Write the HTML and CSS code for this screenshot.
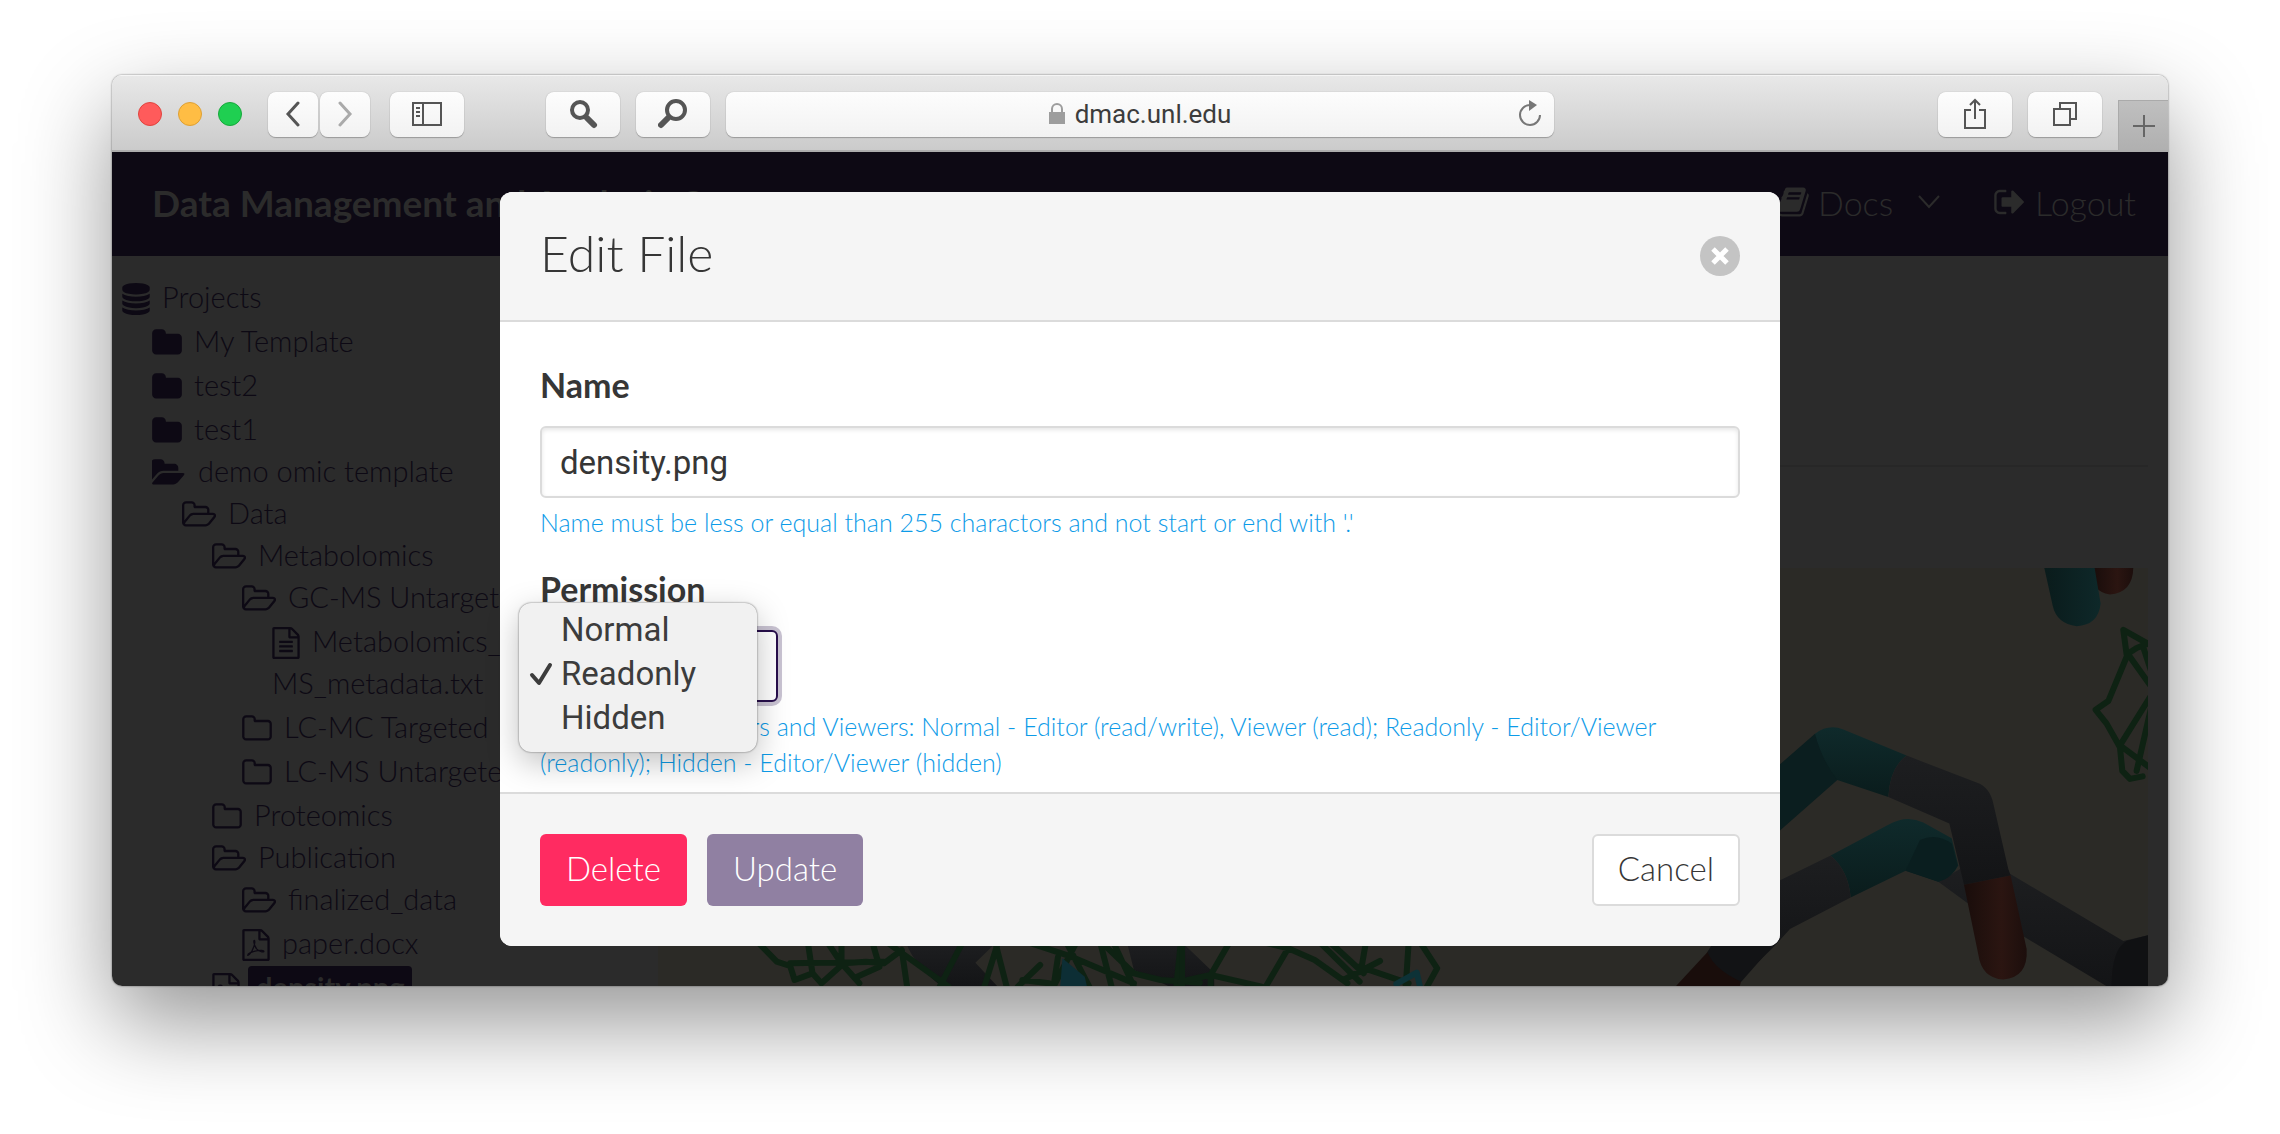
FILE: index.html
```html
<!DOCTYPE html>
<html lang="en">
<head>
<meta charset="utf-8">
<title>Data Management and Analysis Core</title>
<link rel="stylesheet" href="styles.css">
</head>
<body>
<svg class="sprite" aria-hidden="true">
  <symbol id="database" viewBox="128 0 1536 1792"><path d="M896 768q237 0 443-43t325-127v170q0 69-103 128t-280 93.500-385 34.500-385-34.500-280-93.500-103-128v-170q119 84 325 127t443 43zm0 768q237 0 443-43t325-127v170q0 69-103 128t-280 93.500-385 34.500-385-34.500-280-93.500-103-128v-170q119 84 325 127t443 43zm0-384q237 0 443-43t325-127v170q0 69-103 128t-280 93.500-385 34.500-385-34.500-280-93.500-103-128v-170q119 84 325 127t443 43zm0-1152q208 0 385 34.500t280 93.500 103 128v128q0 69-103 128t-280 93.500-385 34.500-385-34.500-280-93.500-103-128v-128q0-69 103-128t280-93.500 385-34.500z"/></symbol>
  <symbol id="folder" viewBox="64 0 1664 1792"><path d="M1728 608v704q0 92-66 158t-158 66h-1216q-92 0-158-66t-66-158v-960q0-92 66-158t158-66h320q92 0 158 66t66 158v32h672q92 0 158 66t66 158z"/></symbol>
  <symbol id="folder-o" viewBox="64 0 1664 1792"><path d="M1600 1312v-704q0-40-28-68t-68-28h-704q-40 0-68-28t-28-68v-64q0-40-28-68t-68-28h-320q-40 0-68 28t-28 68v960q0 40 28 68t68 28h1216q40 0 68-28t28-68zm128-704v704q0 92-66 158t-158 66h-1216q-92 0-158-66t-66-158v-960q0-92 66-158t158-66h320q92 0 158 66t66 158v32h672q92 0 158 66t66 158z"/></symbol>
  <symbol id="open" viewBox="0 0 1904 1792"><path d="M1815 952q0 31-31 66l-336 396q-43 51-120.500 86.500t-143.500 35.500h-1088q-34 0-60.500-13t-26.500-43q0-31 31-66l336-396q43-51 120.500-86.500t143.500-35.500h1088q34 0 60.500 13t26.500 43zm-343-344v160h-832q-94 0-197 47.500t-164 119.500l-337 396-5 6q0-4-.5-12.500t-.5-12.500v-960q0-92 66-158t158-66h320q92 0 158 66t66 158v32h544q92 0 158 66t66 158z"/></symbol>
  <symbol id="open-o" viewBox="64 0 1904 1792"><path d="M1845 931q0-35-53-35h-1088q-40 0-85.500 21.500t-71.500 52.500l-294 363q-18 24-18 40 0 35 53 35h1088q40 0 86-22t71-53l294-363q18-22 18-39zm-1141-163h768v-160q0-40-28-68t-68-28h-576q-40 0-68-28t-28-68v-64q0-40-28-68t-68-28h-320q-40 0-68 28t-28 68v853l256-315q44-53 116-87.500t140-34.500zm1269 163q0 62-46 120l-295 363q-43 53-116 87.500t-140 34.500h-1088q-92 0-158-66t-66-158v-960q0-92 66-158t158-66h320q92 0 158 66t66 158v32h544q92 0 158 66t66 158v160h192q54 0 99 24.500t67 70.500q15 32 15 68z"/></symbol>
  <symbol id="file-text" viewBox="128 0 1536 1792"><path d="M1596 380q28 28 48 76t20 88v1152q0 40-28 68t-68 28h-1344q-40 0-68-28t-28-68v-1600q0-40 28-68t68-28h896q40 0 88 20t76 48zm-444-244v376h376q-10-29-22-41l-313-313q-12-12-41-22zm384 1528v-1024h-416q-40 0-68-28t-28-68v-416h-768v1536h1280zm-1024-864q0-14 9-23t23-9h704q14 0 23 9t9 23v64q0 14-9 23t-23 9h-704q-14 0-23-9t-9-23v-64zm736 224q14 0 23 9t9 23v64q0 14-9 23t-23 9h-704q-14 0-23-9t-9-23v-64q0-14 9-23t23-9h704zm0 256q14 0 23 9t9 23v64q0 14-9 23t-23 9h-704q-14 0-23-9t-9-23v-64q0-14 9-23t23-9h704z"/></symbol>
  <symbol id="file-pdf" viewBox="128 0 1536 1792"><path d="M1596 380q28 28 48 76t20 88v1152q0 40-28 68t-68 28h-1344q-40 0-68-28t-28-68v-1600q0-40 28-68t68-28h896q40 0 88 20t76 48zm-444-244v376h376q-10-29-22-41l-313-313q-12-12-41-22zm384 1528v-1024h-416q-40 0-68-28t-28-68v-416h-768v1536h1280z"/><path fill="none" stroke="currentColor" stroke-width="72" stroke-linejoin="round" d="M430 1470q110-20 250-260 140-260 150-480 0-90-30-90t-20 110q20 200 150 360 130 150 290 170 120 10 120-30t-130-50q-280-10-620 120-160 80-160 150z"/></symbol>
  <symbol id="file-image" viewBox="128 0 1536 1792"><path d="M1596 380q28 28 48 76t20 88v1152q0 40-28 68t-68 28h-1344q-40 0-68-28t-28-68v-1600q0-40 28-68t68-28h896q40 0 88 20t76 48zm-444-244v376h376q-10-29-22-41l-313-313q-12-12-41-22zm384 1528v-1024h-416q-40 0-68-28t-28-68v-416h-768v1536h1280zM576 640a160 160 0 1 0 .1 0zM384 1536v-192l192-192 128 128 384-384 320 320v320z"/></symbol>
  <symbol id="book" viewBox="0 0 1792 1792"><path d="M1703 478q40 57 18 129l-275 906q-19 64-76.500 107.500t-122.500 43.500h-923q-77 0-148.500-53.500t-99.500-131.500q-24-67-2-127 0-4 3-27t4-37q1-8-3-21.500t-3-19.500q2-11 8-21t16.500-23.500 16.500-23.500q23-38 45-91.500t30-91.500q3-10 .5-30t-.5-28q3-11 17-28t17-23q21-36 42-92t25-90q1-9-2.500-32t.5-28q4-13 22-30.500t22-22.500q19-26 42.500-84.500t27.500-96.500q1-8-3-25.500t-2-26.500q2-8 9-18t18-23 17-21q8-12 16.500-30.500t15-35 16-36 19.500-32 26.500-23.500 36-11.500 47.500 5.500l-1 3q38-9 51-9h761q74 0 114 56t18 130l-274 906q-36 119-71.500 153.500t-128.500 34.500h-869q-27 0-38 15-11 16-1 43 24 70 144 70h923q29 0 56-15.500t35-41.500l300-987q7-22 5-57 38 15 59 43zm-1064 2q-4 13 2 22.500t20 9.500h608q13 0 25.500-9.500t16.500-22.500l21-64q4-13-2-22.500t-20-9.500h-608q-13 0-25.500 9.500t-16.500 22.500zm-83 256q-4 13 2 22.500t20 9.500h608q13 0 25.500-9.500t16.500-22.500l21-64q4-13-2-22.500t-20-9.500h-608q-13 0-25.500 9.500t-16.500 22.500z"/></symbol>
  <symbol id="sign-out" viewBox="0 0 1792 1792"><path d="M704 1440q0 4 1 20t.5 26.500-3 23.500-10 19.500-20.500 6.500h-320q-119 0-203.500-84.500t-84.500-203.500v-704q0-119 84.500-203.500t203.500-84.500h320q13 0 22.500 9.500t9.500 22.500q0 4 1 20t.5 26.500-3 23.500-10 19.500-20.500 6.500h-320q-66 0-113 47t-47 113v704q0 66 47 113t113 47h312l11.500 1 11.500 3 8 5.500 7 9 2 13.500zm928-544q0 26-19 45l-544 544q-19 19-45 19t-45-19-19-45v-288h-448q-26 0-45-19t-19-45v-384q0-26 19-45t45-19h448v-288q0-26 19-45t45-19 45 19l544 544q19 19 19 45z"/></symbol>
</svg>

<div class="window">
  <header class="toolbar">
    <div class="lights"><span class="light red"></span><span class="light amber"></span><span class="light green"></span></div>
    <div class="history">
      <button class="tool narrow" aria-label="Back"><svg width="16" height="26" viewBox="0 0 16 26"><path class="line thick" d="M13 2 3 13l10 11"/></svg></button>
      <button class="tool narrow off" aria-label="Forward"><svg width="16" height="26" viewBox="0 0 16 26"><path class="line thick" d="m3 2 10 11L3 24"/></svg></button>
    </div>
    <button class="tool sidebar-tool" aria-label="Sidebar"><svg width="30" height="24" viewBox="0 0 30 24"><path class="line" d="M1 1h28v22H1zM11 1v22M4 6h4M4 10h4M4 14h4"/></svg></button>
    <button class="tool" aria-label="Find"><svg width="30" height="30" viewBox="0 0 30 30"><circle class="line bold" cx="12" cy="11" r="8"/><path class="line bolder" d="m19 19 7 7"/></svg></button>
    <button class="tool" aria-label="Find again"><svg width="30" height="30" viewBox="0 0 30 30"><circle class="line bold" cx="18" cy="11" r="9"/><path class="line bolder" d="m10 19-7 7"/></svg></button>
    <div class="address">
      <svg width="16" height="22" viewBox="0 0 16 22"><path fill="#9d9d9d" d="M0 9h16v12H0z"/><path fill="none" stroke="#9d9d9d" stroke-width="2" d="M3 10V6a5 5 0 0 1 10 0v4"/></svg>
      <span>dmac.unl.edu</span>
      <button class="reload" aria-label="Reload"><svg width="24" height="28" viewBox="0 0 24 28"><path fill="none" stroke="#777" stroke-width="2" d="M12 5a10 10 0 1 0 10 10"/><path fill="#777" d="m11 0 8 5-8 6z"/></svg></button>
    </div>
    <div class="share">
      <button class="tool" aria-label="Share"><svg width="24" height="32" viewBox="0 0 24 32"><path class="line" d="M8 12H2v18h20V12h-6M12 21V2M7 7l5-5 5 5"/></svg></button>
      <button class="tool" aria-label="Tabs"><svg width="26" height="26" viewBox="0 0 26 26"><path class="line" d="M2 8h16v16H2zM8 8V2h16v16h-6"/></svg></button>
    </div>
    <button class="new-tab" aria-label="New tab"><svg width="22" height="22" viewBox="0 0 22 22"><path class="line" d="M11 0v22M0 11h22"/></svg></button>
  </header>

  <div class="page">
    <nav class="navbar">
      <a class="brand" href="#">Data Management and Analysis Core</a>
      <div class="links">
        <a href="#"><svg class="icon"><use href="#book"/></svg>Docs <svg class="chevron" width="24" height="16" viewBox="0 0 24 16"><path d="m2 2 10 11L22 2"/></svg></a>
        <a href="#"><svg class="icon"><use href="#sign-out"/></svg>Logout</a>
      </div>
    </nav>
    <div class="columns">
      <aside class="tree">
        <a class="row tall" href="#"><svg class="i-file"><use href="#database"/></svg>Projects</a>
        <a class="row tall l1" href="#"><svg class="i-folder"><use href="#folder"/></svg>My Template</a>
        <a class="row tall l1" href="#"><svg class="i-folder"><use href="#folder"/></svg>test2</a>
        <a class="row tall l1" href="#"><svg class="i-folder"><use href="#folder"/></svg>test1</a>
        <a class="row l1" href="#"><svg class="i-open"><use href="#open"/></svg>demo omic template</a>
        <a class="row l2" href="#"><svg class="i-open"><use href="#open-o"/></svg>Data</a>
        <a class="row l3" href="#"><svg class="i-open"><use href="#open-o"/></svg>Metabolomics</a>
        <a class="row l4" href="#"><svg class="i-open"><use href="#open-o"/></svg>GC-MS Untargeted</a>
        <a class="row tall l5" href="#"><svg class="i-file"><use href="#file-text"/></svg>Metabolomics_GC-MS_metadata.txt</a>
        <a class="row tall l4" href="#"><svg class="i-folder"><use href="#folder-o"/></svg>LC-MC Targeted</a>
        <a class="row tall l4" href="#"><svg class="i-folder"><use href="#folder-o"/></svg>LC-MS Untargeted</a>
        <a class="row tall l3" href="#"><svg class="i-folder"><use href="#folder-o"/></svg>Proteomics</a>
        <a class="row l3" href="#"><svg class="i-open"><use href="#open-o"/></svg>Publication</a>
        <a class="row l4" href="#"><svg class="i-open"><use href="#open-o"/></svg>finalized_data</a>
        <a class="row tall l4" href="#"><svg class="i-file"><use href="#file-pdf"/></svg>paper.docx</a>
        <a class="row tall l3" href="#"><svg class="i-file"><use href="#file-image"/></svg><span class="selected">density.png</span></a>
      </aside>
      <main class="content">
        <hr>
        <svg class="molecule" viewBox="0 0 1490 418" preserveAspectRatio="xMaxYMin slice" role="img" aria-label="Molecular density">
          <defs>
            <linearGradient id="teal" x1="0" x2="1"><stop offset="0" stop-color="#0a1b1b"/><stop offset="1" stop-color="#0e2829"/></linearGradient>
            <linearGradient id="tealdown" x2="0" y2="1"><stop offset="0" stop-color="#0f2a2b"/><stop offset="1" stop-color="#0a1c1c"/></linearGradient>
            <linearGradient id="rust" x1="0" x2="1"><stop offset="0" stop-color="#190d0b"/><stop offset=".6" stop-color="#2b1511"/><stop offset="1" stop-color="#1c0e0c"/></linearGradient>
            <linearGradient id="grey" x2="0" y2="1"><stop offset="0" stop-color="#1d1e20"/><stop offset="1" stop-color="#131416"/></linearGradient>
          </defs>
          <rect width="1490" height="418" fill="#2b2a26"/>
          <g transform="translate(1102 -128) scale(.3333 .3636)">
            <path fill="url(#rust)" d="M1000 352H1120Q1118 420 1050 425 1020 420 1008 405z"/>
            <path fill="url(#teal)" d="M853 352H1004L1022 450Q1015 510 950 512 890 505 878 455z"/>
            <path fill="url(#grey)" d="M535 1215 600 1180 745 1190 1090 1378 1164 1362V1505H1045L790 1365 620 1272z"/>
            <path fill="#101113" d="M1055 1505Q1055 1400 1100 1378L1164 1362V1505z"/>
            <path fill="url(#tealdown)" d="M212 1143 385 1058Q440 1030 490 1052L575 1095 595 1170Q575 1205 535 1215L437 1185 272 1258Q265 1185 212 1143z"/>
            <path fill="#0a1e1f" d="M437 1185 480 1100Q530 1080 575 1110L592 1170Q575 1205 535 1215z"/>
            <path fill="url(#grey)" d="M50 1215 212 1143Q265 1185 272 1258L90 1345 35 1400-10 1440-30 1400z"/>
            <path fill="url(#tealdown)" d="M165 808Q205 780 250 796L440 868Q390 900 385 982L232 935 150 900z"/>
            <path fill="#0b1e1f" d="M40 908 165 808Q185 880 232 935L40 1090z"/>
            <path fill="url(#grey)" d="M440 868 650 942Q690 955 700 1000L745 1180 752 1198 612 1223 568 1055 385 982Q390 900 440 868z"/>
            <path fill="url(#rust)" d="M612 1223 752 1198 800 1400Q805 1478 730 1484 665 1480 655 1415z"/>
            <path class="mesh" d="M1175 566 1090 522 1100 590 1130 572 1175 556M1103 590 1045 718 1007 742 1040 780 1080 845 1087 910 1110 932 1148 925M1105 590 1175 680M1175 700 1080 840 1175 905M1175 730 1130 910M1150 570 1175 640"/>
          </g>
          <g transform="translate(-158 232) scale(.4464 .3333)">
            <path fill="url(#grey)" d="M910 430H1110L1065 488 1115 560H990Q930 500 910 430zM1405 430H1530L1600 520V560H1500L1420 510z"/>
            <path class="mesh" d="M580 430 620 485 650 498 660 540 700 520 720 550 770 490 820 485 860 490 900 450M650 490 860 485M690 430 700 520M735 430 765 490 805 550M765 430V490M835 430 850 500 800 530M870 430 1005 560M900 450 912 560M1035 430 985 560M1115 430 1085 560M1110 430 1135 560M1190 430 1280 470 1420 550M1210 495 1160 560M1170 540 1230 550M1250 470 1240 560M1290 430 1240 560M1270 430 1320 560M1345 430 1370 560M1375 430 1420 560M1350 430 1420 520 1480 540 1568 548M1525 430 1515 560"/>
            <path fill="#0d2e35" d="M1255 560 1260 475 1310 530 1315 560z"/>
          </g>
          <g transform="translate(522 232) scale(.4082 .3333)">
            <path class="mesh" d="M5 430V560M120 430 75 525V560M0 545 75 525 200 560M210 560 265 445M215 430 265 445 330 480 410 550M345 430 440 545M370 430 450 520M455 430 445 500M490 483 400 540M440 500 560 550M560 430 553 560M590 430 630 505 605 560"/>
            <path class="mesh cyan" d="M530 552 580 518 588 560"/>
            <path fill="#190d0b" d="M1210 565 1297 450 1375 540 1370 565z"/>
            <path fill="#121315" d="M1292 456 1310 420H1465L1375 545Q1310 510 1292 456z"/>
          </g>
        </svg>
      </main>
    </div>

    <div class="overlay">
      <form class="modal" role="dialog" aria-labelledby="title">
        <div class="modal-head">
          <h1 id="title">Edit File</h1>
          <button type="button" class="close" aria-label="Close"><svg width="40" height="40" viewBox="0 0 40 40"><circle cx="20" cy="20" r="20"/><path d="m13 13 14 14m0-14L13 27"/></svg></button>
        </div>
        <div class="modal-body">
          <div class="field">
            <label for="name">Name</label>
            <input id="name" type="text" value="density.png">
            <p class="help">Name must be less or equal than 255 charactors and not start or end with '.'</p>
          </div>
          <div class="field">
            <label for="permission">Permission</label>
            <div class="select">
              <select id="permission"><option>Normal</option><option selected>Readonly</option><option>Hidden</option></select>
              <ul class="menu" role="listbox">
                <li role="option">Normal</li>
                <li role="option" aria-selected="true"><svg width="24" height="26" viewBox="0 0 24 26"><path d="m3 14 7 8L21 4"/></svg>Readonly</li>
                <li role="option">Hidden</li>
              </ul>
            </div>
            <p class="help">Set access for Editors and Viewers: Normal - Editor (read/write), Viewer (read); Readonly - Editor/Viewer (readonly); Hidden - Editor/Viewer (hidden)</p>
          </div>
        </div>
        <div class="modal-foot">
          <button type="button" class="btn danger">Delete</button>
          <button type="submit" class="btn primary">Update</button>
          <button type="button" class="btn cancel">Cancel</button>
        </div>
      </form>
    </div>
  </div>
</div>
</body>
</html>
```

FILE: styles.css
```css
* { box-sizing: border-box; }

body {
  margin: 0;
  height: 100vh;
  padding: 75px 112px 148px;
  display: flex;
  background: #fff;
  font-family: Lato, "Liberation Sans", sans-serif;
  font-weight: 300;
  overflow: hidden;
}

button { font: inherit; cursor: pointer; }
a { color: inherit; text-decoration: none; }
.sprite { position: absolute; width: 0; height: 0; }

/* Browser window */
.window {
  flex: 1;
  min-width: 0;
  display: flex;
  flex-direction: column;
  border-radius: 10px;
  overflow: hidden;
  box-shadow: 0 0 2px rgba(0, 0, 0, .6), 0 36px 90px rgba(0, 0, 0, .42);
}

.toolbar {
  height: 77px;
  flex: none;
  display: flex;
  align-items: center;
  padding-top: 2px;
  padding-left: 26px;
  background: linear-gradient(#e8e8e8, #cbcbcb);
  border-top: 1px solid #f5f5f5;
  border-bottom: 2px solid #adadad;
}

.lights { display: flex; gap: 16px; margin-right: 26px; }
.light { width: 24px; height: 24px; border-radius: 50%; border: 1px solid #e0443e; background: #ff5b5b; }
.amber { background: #ffbd44; border-color: #dea034; }
.green { background: #1fcf51; border-color: #17a83b; }

.history { display: flex; gap: 2px; margin-right: 20px; }

.tool {
  width: 74px;
  height: 45px;
  flex: none;
  padding: 0;
  display: grid;
  place-items: center;
  border: 0;
  border-radius: 8px;
  color: #555;
  background: linear-gradient(#fdfdfd, #f2f2f2);
  box-shadow: 0 0 1px #999, 0 1px 1px #999;
}
.tool + .tool { margin-left: 16px; }
.narrow { width: 50px; }
.narrow + .narrow { margin-left: 0; }
.off { color: #aaa; }
.sidebar-tool { margin-right: 66px; }

.line { fill: none; stroke: currentColor; stroke-width: 2; }
.thick { stroke-width: 3; stroke-linecap: round; }
.bold { stroke-width: 4; }
.bolder { stroke-width: 6; stroke-linecap: round; }

.address {
  position: relative;
  width: 828px;
  height: 45px;
  margin-left: 16px;
  display: flex;
  align-items: center;
  justify-content: center;
  gap: 10px;
  border-radius: 8px;
  background: linear-gradient(#fdfdfd, #f2f2f2);
  box-shadow: 0 0 1px #999, 0 1px 1px #999;
  font: 400 26px/30px Roboto, sans-serif;
  color: #3c3c3c;
}
.reload { position: absolute; right: 12px; border: 0; padding: 0; background: none; display: flex; }

.share { display: flex; margin-left: auto; margin-right: 16px; }
.new-tab {
  width: 50px;
  height: 50px;
  align-self: flex-end;
  padding: 0;
  display: grid;
  place-items: center;
  border: 0;
  border-left: 1px solid #aaa;
  border-top: 1px solid #aaa;
  color: #666;
  background: linear-gradient(#bfbfbf, #b0b0b0);
}

/* Web page */
.page {
  position: relative;
  flex: 1;
  min-height: 0;
  display: flex;
  flex-direction: column;
  overflow: hidden;
  background: #2b2b2b;
  color: #0d0914;
}

.navbar {
  height: 104px;
  flex: none;
  display: flex;
  align-items: center;
  justify-content: space-between;
  padding: 0 32px 4px 40px;
  background: #0d0914;
  color: #2b2b2b;
  font-size: 34px;
}
.brand { font-size: 37px; font-weight: 700; }
.links { display: flex; gap: 52px; }
.links a { display: flex; align-items: center; gap: 8px; }
.icon { width: 34px; height: 34px; fill: currentColor; }
.chevron { margin-left: 16px; fill: none; stroke: currentColor; stroke-width: 2; }

.columns { flex: 1; min-height: 0; display: flex; }

.tree {
  width: 25%;
  flex: none;
  padding: 18px 0 0 10px;
  font-size: 29px;
  line-height: 42px;
}
.row { display: block; }
.tall { padding-top: 2px; }
.l1 { margin-left: 30px; }
.l2 { margin-left: 60px; }
.l3 { margin-left: 90px; }
.l4 { margin-left: 120px; }
.l5 { margin-left: 150px; }
.row svg { height: 32px; margin-right: 12px; vertical-align: -5px; fill: currentColor; margin-block: -2px; }
.i-file { width: 28px; }
.i-folder { width: 30px; }
.i-open { width: 34px; }
.selected { display: inline-block; margin-left: -4px; padding: 0 8px; border-radius: 4px; background: #0d0914; color: #2b2b2b; font-weight: 700; }

.content { flex: 1; min-width: 0; display: flex; flex-direction: column; padding: 209px 20px 0 32px; }
.content hr { width: 100%; height: 2px; margin: 0 0 101px; border: 0; background: #272727; }
.molecule { flex: 1; min-height: 0; width: 100%; display: block; }
.mesh { fill: none; stroke: #0e2213; stroke-width: 6; stroke-linejoin: round; stroke-linecap: round; vector-effect: non-scaling-stroke; }
.cyan { stroke: #0d3237; }

/* Dialog */
.overlay { position: absolute; inset: 0; display: flex; align-items: center; justify-content: center; }
.modal {
  width: 1280px;
  max-width: 100%;
  border-radius: 12px;
  background: #fff;
  color: #363636;
  font-size: 33px;
  line-height: 48px;
}
.modal-head, .modal-foot { display: flex; align-items: center; padding: 40px; background: #f5f5f5; }
.modal-head { justify-content: space-between; border-bottom: 2px solid #dbdbdb; border-radius: 12px 12px 0 0; }
.modal-foot { gap: 20px; border-top: 2px solid #dbdbdb; border-radius: 0 0 12px 12px; }
h1 { margin: 0; padding-bottom: 6px; font-size: 50px; line-height: 42px; font-weight: 300; }
.close { display: flex; border: 0; padding: 0; background: none; }
.close circle { fill: #c4c4c4; }
.close path { fill: none; stroke: #fff; stroke-width: 5; }

.modal-body { padding: 40px 40px 12px; }
.field + .field { margin-top: 24px; }
label { display: block; margin-bottom: 18px; font-size: 34px; line-height: 46px; font-weight: 700; }
input, select {
  display: block;
  height: 72px;
  padding: 0 18px;
  border: 2px solid #dbdbdb;
  border-radius: 6px;
  background: #fff;
  color: #363636;
  font: 400 33px/48px Roboto, sans-serif;
}
input { width: 100%; box-shadow: inset 0 2px 4px rgba(10, 10, 10, .1); }
select { width: 238px; appearance: none; border-color: #280f4c; box-shadow: 0 0 0 4px rgba(40, 15, 76, .25); }
.help { margin: 6px 0 0; font-size: 25px; line-height: 36px; color: #0d9be8; }
.field:first-child .help { padding-bottom: 2px; }

.select { position: relative; width: 238px; }
.menu {
  position: absolute;
  left: -21px;
  top: -27px;
  width: 238px;
  margin: 0;
  padding: 5px 0 12px;
  list-style: none;
  border-radius: 12px;
  background: #f1f1f1;
  color: #3c3c3c;
  font: 400 33px/44px Roboto, sans-serif;
  box-shadow: 0 0 2px rgba(0, 0, 0, .6), 0 10px 32px rgba(0, 0, 0, .25);
}
.menu li { display: flex; align-items: center; justify-content: flex-start; gap: 8px; padding-left: 42px; }
.menu li[aria-selected] { padding-left: 10px; }
.menu path { fill: none; stroke: currentColor; stroke-width: 4; stroke-linecap: round; stroke-linejoin: round; }

.btn { height: 72px; padding: 0 24px 4px; border: 2px solid transparent; border-radius: 6px; }
.danger { background: #ff2b61; color: #fff; }
.primary { background: #9080a2; color: #fff; }
.cancel { margin-left: auto; background: #fff; border-color: #dbdbdb; color: #363636; }
```
